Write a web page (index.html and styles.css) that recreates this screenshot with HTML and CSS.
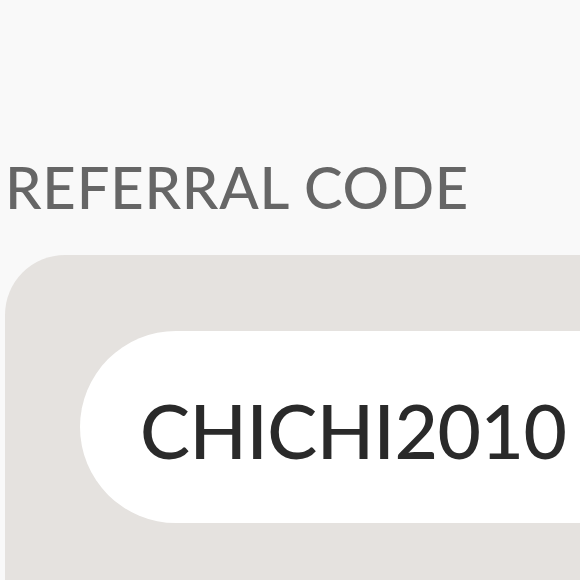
FILE: index.html
```html
<!DOCTYPE html>
<html lang="en">
<head>
    <meta charset="UTF-8">
    <meta name="viewport" content="width=device-width, initial-scale=1.0">
    <title>Referral Code</title>
    <link rel="stylesheet" href="styles.css">
</head>
<body>
    <div class="page">
        <h2 class="label">REFERRAL CODE</h2>
        <div class="code-card">
            <div class="code-pill">
                <span class="code-value">CHICHI2010</span>
            </div>
        </div>
    </div>
</body>
</html>
```
FILE: styles.css
```css
html, body {
    margin: 0;
    padding: 0;
    background: #f9f9f9;
    overflow: hidden;
}
.page {
    width: 900px;
    height: 580px;
    padding-left: 5px;
    font-family: 'Lato', 'Noto Sans', sans-serif;
}
.label {
    margin: 0;
    padding-top: 158px;
    font-size: 58px;
    line-height: 1;
    font-weight: 500;
    letter-spacing: 0.8px;
    color: #666666;
}
.code-card {
    margin-top: 39px;
    background: #e5e2df;
    border-radius: 60px 0 0 0;
    padding: 76px 0 120px 75px;
}
.code-pill {
    display: flex;
    align-items: center;
    height: 192px;
    background: #ffffff;
    border-radius: 96px 0 0 96px;
    padding-left: 60px;
}
.code-value {
    font-size: 75px;
    line-height: 1;
    font-weight: 500;
    letter-spacing: -0.5px;
    padding-top: 6px;
    color: #2a2a2a;
}
```
